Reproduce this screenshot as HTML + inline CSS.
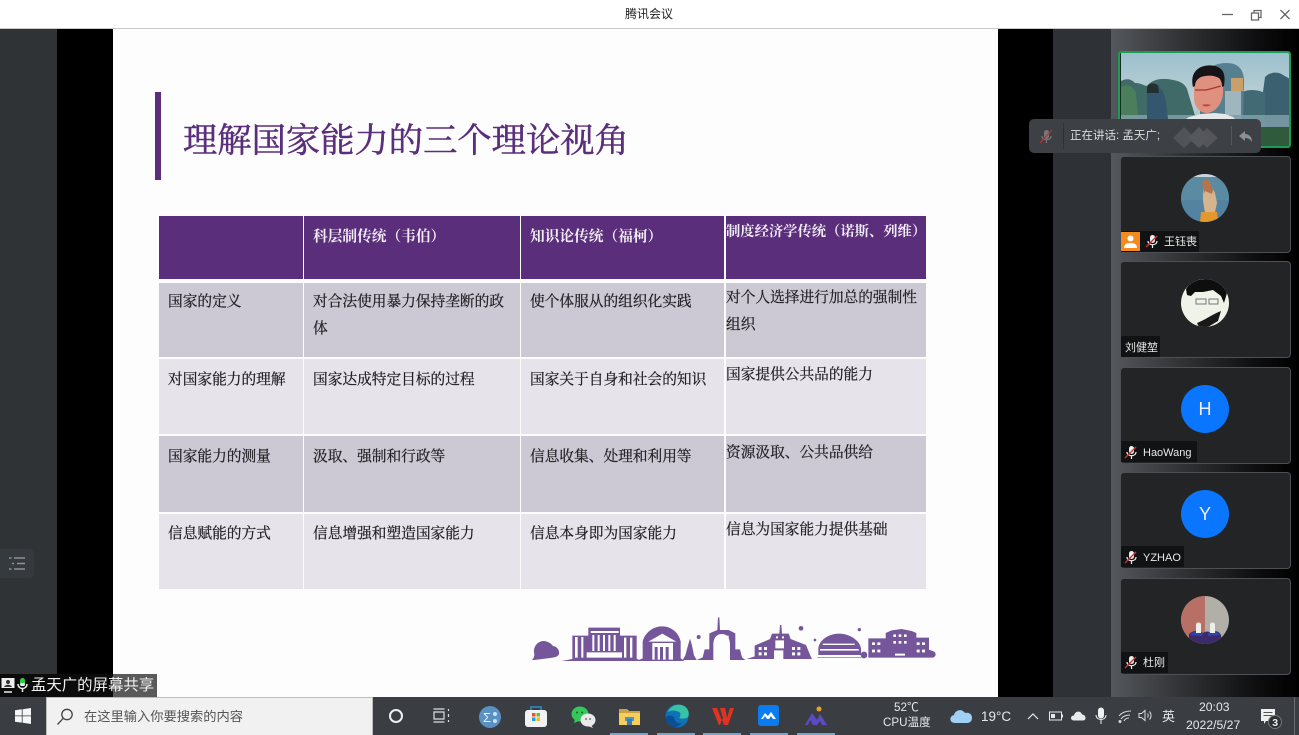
<!DOCTYPE html>
<html lang="zh"><head><meta charset="utf-8"><title>腾讯会议</title>
<style>
html,body{margin:0;padding:0;background:#000}
#p{position:relative;width:1299px;height:735px;overflow:hidden;background:#000;font-family:"Liberation Sans","Noto Sans CJK SC",sans-serif}
#p div,#p span.a,#p svg{position:absolute}
.t{white-space:nowrap;line-height:1}
.s{font-family:"Liberation Serif","Noto Serif CJK SC",serif;font-size:14.7px;color:#1f1f23;white-space:nowrap;line-height:1;-webkit-text-stroke:.25px #1f1f23}
.h{font-weight:700;color:#f1edf5;-webkit-text-stroke:0}
.card{left:1120px;width:171px;height:97px;background:#222426;border:1px solid #4d5054;border-radius:4px;box-sizing:border-box}
.av{left:1181px;width:48px;height:48px;border-radius:50%;overflow:hidden}
.lab{left:1121px;height:21px;background:#111213}
.n{color:#e8e8e8;font-size:11px;white-space:nowrap;line-height:1}
.c{background:#cdc9d4}.d{background:#e6e4ea}.pu{background:#5b2e7b}
.tb{color:#e6e8ea;white-space:nowrap;line-height:1}
</style></head><body><div id="p">
<!-- title bar -->
<div style="left:0;top:0;width:1299px;height:28px;background:#fff;border-bottom:1px solid #c9c9c9;box-sizing:content-box"></div>
<div class="t" style="left:625px;top:8px;font-size:12px;color:#222">腾讯会议</div>
<svg style="left:1220px;top:8px" width="72" height="13" viewBox="0 0 72 13" fill="none" stroke="#666" stroke-width="1.300"><path d="M2 6.500H13"/><path d="M31.500 5h7v7h-7zM34 5V2.500h7v7h-2.500"/><path d="M60.500 2l9 9M69.500 2l-9 9"/></svg>
<!-- backgrounds -->
<div style="left:0;top:29px;width:57px;height:668px;background:#2f3336"></div>
<div style="left:113px;top:29px;width:885px;height:668px;background:#fdfdfe"></div>
<div style="left:1053px;top:29px;width:58px;height:668px;background:#2e3236"></div>
<div style="left:1111px;top:29px;width:188px;height:668px;background:linear-gradient(90deg,#55585c 0,#333538 35%,#0c0c0d 80%,#000 100%)"></div>
<!-- list button -->
<div style="left:0;top:549px;width:34px;height:29px;background:#353a3e;border-radius:0 5px 5px 0"></div>
<svg style="left:9px;top:556px" width="17" height="15" viewBox="0 0 17 15" fill="none" stroke="#8f9194" stroke-width="1.600"><path d="M0 2h2.500M5 2h11M3 7.500h2M8 7.500h8M0 13h2.500M5 13h11"/></svg>
<!-- slide title -->
<div style="left:155px;top:92px;width:6px;height:88px;background:#5b2e7b"></div>
<div class="t" style="left:183px;top:124px;font-family:'Liberation Serif','Noto Serif CJK SC',serif;font-size:34.300px;color:#5b2e7b;-webkit-text-stroke:.5px #5b2e7b">理解国家能力的三个理论视角</div>
<!-- table -->
<div class="pu" style="left:159px;top:216px;width:144px;height:63px"></div>
<div class="pu" style="left:304px;top:216px;width:216px;height:63px"></div>
<div class="pu" style="left:521px;top:216px;width:203px;height:63px"></div>
<div class="pu" style="left:726px;top:216px;width:200px;height:63px"></div>

<div class="c" style="left:159px;top:283px;width:144px;height:74px"></div>
<div class="c" style="left:304px;top:283px;width:216px;height:74px"></div>
<div class="c" style="left:521px;top:283px;width:203px;height:74px"></div>
<div class="c" style="left:726px;top:283px;width:200px;height:74px"></div>

<div class="d" style="left:159px;top:359px;width:144px;height:75px"></div>
<div class="d" style="left:304px;top:359px;width:216px;height:75px"></div>
<div class="d" style="left:521px;top:359px;width:203px;height:75px"></div>
<div class="d" style="left:726px;top:359px;width:200px;height:75px"></div>

<div class="c" style="left:159px;top:436px;width:144px;height:76px"></div>
<div class="c" style="left:304px;top:436px;width:216px;height:76px"></div>
<div class="c" style="left:521px;top:436px;width:203px;height:76px"></div>
<div class="c" style="left:726px;top:436px;width:200px;height:76px"></div>

<div class="d" style="left:159px;top:514px;width:144px;height:75px"></div>
<div class="d" style="left:304px;top:514px;width:216px;height:75px"></div>
<div class="d" style="left:521px;top:514px;width:203px;height:75px"></div>
<div class="d" style="left:726px;top:514px;width:200px;height:75px"></div>

<div class="s h" style="left:313px;top:230px">科层制传统（韦伯）</div>
<div class="s h" style="left:530px;top:230px">知识论传统（福柯）</div>
<div class="s h" style="left:726px;top:225px;font-size:14.300px">制度经济学传统（诺斯、列维）</div>

<div class="s" style="left:168px;top:295px">国家的定义</div>
<div class="s" style="left:313px;top:295px">对合法使用暴力保持垄断的政</div>
<div class="s" style="left:313px;top:322px">体</div>
<div class="s" style="left:530px;top:295px">使个体服从的组织化实践</div>
<div class="s" style="left:726px;top:291px">对个人选择进行加总的强制性</div>
<div class="s" style="left:726px;top:318px">组织</div>

<div class="s" style="left:168px;top:373px">对国家能力的理解</div>
<div class="s" style="left:313px;top:373px">国家达成特定目标的过程</div>
<div class="s" style="left:530px;top:373px">国家关于自身和社会的知识</div>
<div class="s" style="left:726px;top:368px">国家提供公共品的能力</div>

<div class="s" style="left:168px;top:450px">国家能力的测量</div>
<div class="s" style="left:313px;top:450px">汲取、强制和行政等</div>
<div class="s" style="left:530px;top:450px">信息收集、处理和利用等</div>
<div class="s" style="left:726px;top:446px">资源汲取、公共品供给</div>

<div class="s" style="left:168px;top:527px">信息赋能的方式</div>
<div class="s" style="left:313px;top:527px">信息增强和塑造国家能力</div>
<div class="s" style="left:530px;top:527px">信息本身即为国家能力</div>
<div class="s" style="left:726px;top:523px">信息为国家能力提供基础</div>

<!-- skyline -->
<svg style="left:520px;top:605px" width="430" height="70" viewBox="0 0 1290 210" fill="#76569a">
<path d="M35 165c6-4 8-10 8-18-4-14 2-32 20-38 16-4 30 6 36 14 14 2 20 14 18 24-4 10-14 10-26 12-20 2-40 6-56 6z"/>
<path d="M125 168l32-6V92h48V68h95v24h50v70l20 6z"/>
<g fill="#fff"><path d="M165 96h8v62h-8zM184 96h6v62h-6zM212 78h84v6h-84zM217 90h6v48h-6zM233 90h6v48h-6zM249 90h6v48h-6zM265 90h6v48h-6zM281 90h6v48h-6zM200 142h106v16H200zM312 98h7v60h-7zM330 98h7v60h-7z"/></g>
<path d="M350 168l18-8v-50c6-26 30-46 58-46s50 18 56 46v50l12 8z"/>
<path d="M385 110l42-24 42 24zM397 114h62v50h-62z" fill="#fff"/><path d="M404 126h9v38h-9zM420 126h9v38h-9zM437 126h9v38h-9z"/>
<path d="M488 165l8-14 8-30 6-20 6 20 6 30 8 14z"/>
<path d="M530 165l18-8 6-24h14V85l24-10 2-38h4l2 38 26 0 20 10v48h14l6 24 10 8h-46v-46c0-18-8-32-24-32-18 0-26 14-26 32v46z"/>
<path d="M592 92h34v12h-34z" fill="#fff"/>
<circle cx="536" cy="96" r="6"/>
<path d="M680 162l24-8v-32l46-20 6-16h22l2-26h4l2 26h20l6 16 46 18 14 34 4 8H790v-26h-28v26z"/>
<g fill="#fff"><path d="M716 126h9v9h-9zM732 126h9v9h-9zM716 142h9v9h-9zM732 142h9v9h-9zM816 126h9v9h-9zM832 126h9v9h-9zM816 142h9v9h-9zM832 142h9v9h-9zM766 106h26v24h-26zM768 94h6v6h-6zM786 94h6v6h-6z"/></g>
<circle cx="843" cy="70" r="7"/>
<path d="M895 130c2-24 30-44 62-44s62 20 66 44v20H895z"/>
<path d="M908 116h96v4h-96zM900 132h116v5H900zM894 152h130v4H894z" fill="#fff"/>
<path d="M892 156h132v3H892z" opacity=".6"/>
<circle cx="1018" cy="74" r="5"/><circle cx="885" cy="105" r="4"/>
<circle cx="1032" cy="150" r="10"/>
<path d="M1045 158V100h52V84l18-8 30-4 30 6 14 6v14h38v36l16 6-2 18z"/>
<g fill="#fff"><path d="M1056 112h9v8h-9zM1072 112h9v8h-9zM1056 134h9v8h-9zM1072 134h9v8h-9zM1120 88h8v8h-8zM1136 88h8v8h-8zM1152 88h8v8h-8zM1120 108h8v8h-8zM1136 108h8v8h-8zM1152 108h8v8h-8zM1190 112h9v8h-9zM1206 112h9v8h-9zM1190 134h9v8h-9zM1206 134h9v8h-9zM1125 146h30v6h-30z"/></g>
<circle cx="1238" cy="148" r="9"/>
</svg>

<!-- screen share label -->
<div style="left:0;top:674px;width:113px;height:23px;background:#0b0b0b"></div>
<div style="left:113px;top:674px;width:44px;height:23px;background:#5a5a5a"></div>
<svg style="left:1px;top:677px" width="29" height="17" viewBox="0 0 29 17"><path d="M0.500 1h13v10H0.500z" fill="#eee"/><path d="M3 15h8" stroke="#eee" stroke-width="1.500"/><circle cx="7" cy="5" r="2" fill="#333"/><path d="M3 10c1-3 7-3 8 0z" fill="#333"/><rect x="19" y="1" width="5" height="8" rx="2.500" fill="#2ecc40"/><rect x="19" y="6" width="5" height="3" rx="1.500" fill="#eee"/><path d="M17 7c0 6 9 6 9 0M21.500 12v3" stroke="#eee" stroke-width="1.500" fill="none"/></svg>
<div class="t" style="left:31px;top:678px;font-size:15.400px;color:#f0f0f0">孟天广的屏幕共享</div>

<!-- right cards -->
<div style="left:1118px;top:51px;width:173px;height:97px;box-sizing:border-box;border:2px solid #1d9a56;border-radius:3px;overflow:hidden;background:#1a2a24">
  <svg style="left:1px;top:0" width="169" height="94" viewBox="0 0 169 94">
    <defs><linearGradient id="sky" x1="0" y1="0" x2="0" y2="1"><stop offset="0" stop-color="#9cc0ce"/><stop offset=".5" stop-color="#bcd0d4"/><stop offset="1" stop-color="#a0b8bc"/></linearGradient></defs>
    <rect width="169" height="94" fill="url(#sky)"/>
    <path d="M0 28c6-3 10-2 14 2 5 0 8 2 12 3 4-6 14-9 26-6 7 1 12 4 14 9l12 40H0z" fill="#3f6a68"/>
    <path d="M0 34c6-4 12-1 15 6l3 34H0z" fill="#4b7f5c"/>
    <path d="M144 24c6-6 14-5 18-2l7 4v50h-32z" fill="#3b6070"/>
    <path d="M120 40c6-4 16-4 24 0v36h-24z" fill="#416a74"/>
    <path d="M79 34c1-14 11-24 26-24s17 9 18 16l-1 50H79z" fill="#56808f"/>
    <path d="M110 25h12v13h-12z" fill="#c9a06a"/>
    <path d="M104 38h16v36h-16z" fill="#9fb6bf"/>
    <rect y="62" width="169" height="14" fill="#7f9fa8" opacity=".85"/>
    <rect y="74" width="169" height="20" fill="#2f5a3c"/>
    <path d="M26 66V38c1-8 11-9 13-3 4 4 5 8 6 14l2 17z" fill="#34566e"/>
    <path d="M26 34c1-4 9-5 11-1l1 7H26z" fill="#24302f"/>
    <path d="M62 68l6-4 12-3 14-1 10 1 8 3 4 4z" fill="#e4e8ea"/>
    <path d="M73 26c3-6 9-8 15-8 7 0 12 3 14 9l0 14c-1 9-6 17-15 19-8 0-13-5-14-14z" fill="#e0907e"/>
    <path d="M72 34c-2-9 0-16 8-20 7-3 17-2 21 3 3 4 3 10 2 16l-2 1c0-4-1-7-3-9-5-3-12-3-18-1-4 2-6 5-6 9z" fill="#171417"/>
    <path d="M74 37h11l4-1 11-3" stroke="#a33" stroke-width="1.200" fill="none"/>
    <path d="M81 52c2-1 6-1 9 0-3 2-7 2-9 0z" fill="#b84a48"/>
  </svg>
</div>
<div class="card" style="top:156px"></div>
<div class="card" style="top:261px"></div>
<div class="card" style="top:367px"></div>
<div class="card" style="top:472px"></div>
<div class="card" style="top:578px"></div>

<!-- speaking tooltip -->
<div style="left:1029px;top:119px;width:232px;height:34px;background:#3d4045;border-radius:5px"></div>
<div style="left:1063px;top:123px;width:1px;height:26px;background:#2d3034"></div>
<div style="left:1231px;top:126px;width:1px;height:19px;background:#55585c"></div>
<svg style="left:1039px;top:129px" width="14" height="15" viewBox="0 0 14 15"><rect x="5" y="1" width="5" height="9" rx="2.500" fill="#777"/><path d="M3 7c0 5 9 5 9 0M7.500 11v3" stroke="#777" fill="none" stroke-width="1.200"/><path d="M1 14L13 1" stroke="#b33" stroke-width="1.200"/></svg>
<div class="t" style="left:1070px;top:131px;font-size:11.500px;color:#dcdcdc">正在讲话: 孟天广;</div>
<svg style="left:1172px;top:123px" width="48" height="26" viewBox="0 0 48 26" fill="#55585c"><path d="M1 15L12 4l11 11-11 10z" opacity=".8"/><path d="M16 15L27 4l11 11-11 10z"/><path d="M25 15L35 5l11 10-11 10z" opacity=".9"/></svg>
<svg style="left:1238px;top:130px" width="15" height="14" viewBox="0 0 15 14"><path d="M7 1L1 6l6 5V8c3 0 5 1 7 4 0-5-3-8-7-8z" fill="#8d8f92"/></svg>

<!-- avatars -->
<div class="av" style="top:174px;background:#5b8aa3">
 <svg style="left:0;top:0" width="48" height="48" viewBox="0 0 48 48"><rect width="48" height="3" fill="#c9d6dc"/><rect y="26" width="48" height="22" fill="#5383a0"/><path d="M22 12l8 0 4 7 2 10-2 9-10 1-2-12z" fill="#d6b48e"/><path d="M21 8c2-3 6-3 8 0l3 8-1 4-7-3-1 3z" fill="#b5734e"/><path d="M20 38h16l1 10H19z" fill="#e3982d"/></svg>
</div>
<div class="av" style="top:279px;background:#f0f3e8">
 <svg style="left:0;top:0" width="48" height="48" viewBox="0 0 48 48"><path d="M5 10C10 2 18 0 26 0c10 0 17 5 20 14l-3 10-3-7-8-6-10 2-8 0-4 4-4-1z" fill="#0e0e0e"/><path d="M15 20h10v5H15zM28 20h9v5h-9z" stroke="#777" fill="none"/><path d="M16 44c8-3 14-8 24-12l-3 10-10 6-9 0z" fill="#191919"/></svg>
</div>
<div class="av" style="top:385px;background:#0a75ff"><div class="t" style="left:0;width:48px;top:15px;text-align:center;font-size:18px;color:#eef">H</div></div>
<div class="av" style="top:490px;background:#0a75ff"><div class="t" style="left:0;width:48px;top:15px;text-align:center;font-size:18px;color:#eef">Y</div></div>
<div class="av" style="top:596px;background:#b2aea8">
 <svg style="left:0;top:0" width="48" height="48" viewBox="0 0 48 48"><rect width="24" height="48" fill="#b86f66"/><path d="M8 38c4-4 11-4 14-1 3-2 5-2 8 0 4-3 8-2 10 2l1 9H8z" fill="#3c2a6a"/><path d="M9 39c3-4 9-5 13-2l-1 3zM27 37c4-3 9-2 12 2l-12 1z" fill="#2f45a8"/><path d="M15 28c1-2 4-2 5 0l0 9h-5zM29 28c1-2 4-2 5 0v9h-5z" fill="#f0eeea"/></svg>
</div>

<!-- labels -->
<div class="lab" style="left:1121px;top:231px;width:78px"></div>
<div style="left:1121px;top:232px;width:19px;height:19px;background:#f58a1f"></div>
<svg style="left:1123px;top:234px" width="15" height="15" viewBox="0 0 15 15" fill="#fff"><circle cx="7.500" cy="4.500" r="3"/><path d="M1 14c0-4 3-5 6.500-5s6.500 1 6.500 5z"/></svg>
<div class="n" style="left:1164px;top:237px">王钰喪</div>
<div class="lab" style="left:1121px;top:336px;width:39px"></div>
<div class="n" style="left:1125px;top:343px">刘健堃</div>
<div class="lab" style="left:1121px;top:441px;width:76px"></div>
<div class="n" style="left:1143px;top:448px">HaoWang</div>
<div class="lab" style="left:1121px;top:546px;width:63px"></div>
<div class="n" style="left:1143px;top:553px">YZHAO</div>
<div class="lab" style="left:1121px;top:652px;width:47px"></div>
<div class="n" style="left:1143px;top:658px">杜刚</div>
<svg style="left:1145px;top:234px" width="14" height="15" viewBox="0 0 14 15"><rect x="5" y="1" width="5" height="8" rx="2.500" fill="#eee"/><path d="M3 7c0 5 9 5 9 0M7.500 11v3" stroke="#eee" fill="none" stroke-width="1.200"/><path d="M1 13L12 2" stroke="#c33" stroke-width="1.300"/></svg>
<svg style="left:1124px;top:445px" width="14" height="15" viewBox="0 0 14 15"><rect x="5" y="1" width="5" height="8" rx="2.500" fill="#eee"/><path d="M3 7c0 5 9 5 9 0M7.500 11v3" stroke="#eee" fill="none" stroke-width="1.200"/><path d="M1 13L12 2" stroke="#c33" stroke-width="1.300"/></svg>
<svg style="left:1124px;top:550px" width="14" height="15" viewBox="0 0 14 15"><rect x="5" y="1" width="5" height="8" rx="2.500" fill="#eee"/><path d="M3 7c0 5 9 5 9 0M7.500 11v3" stroke="#eee" fill="none" stroke-width="1.200"/><path d="M1 13L12 2" stroke="#c33" stroke-width="1.300"/></svg>
<svg style="left:1124px;top:655px" width="14" height="15" viewBox="0 0 14 15"><rect x="5" y="1" width="5" height="8" rx="2.500" fill="#eee"/><path d="M3 7c0 5 9 5 9 0M7.500 11v3" stroke="#eee" fill="none" stroke-width="1.200"/><path d="M1 13L12 2" stroke="#c33" stroke-width="1.300"/></svg>

<!-- taskbar -->
<div style="left:0;top:697px;width:1299px;height:38px;background:#3a3e42"></div>
<svg style="left:15px;top:708px" width="16" height="16" viewBox="0 0 16 16" fill="#f4f6f8"><path d="M0 2.300l6.800-1v6.200H0zM7.600 1.200L16 0v7.500H7.600zM0 8.300h6.800v6.300L0 13.700zM7.600 8.300H16V16l-8.400-1.200z"/></svg>
<div style="left:46px;top:697px;width:327px;height:38px;background:#f1f1f1;border:1px solid #bcbcbc;border-bottom:0;box-sizing:border-box"></div>
<svg style="left:56px;top:708px" width="18" height="18" viewBox="0 0 18 18" fill="none" stroke="#444" stroke-width="1.300"><circle cx="11" cy="6.500" r="5.200"/><path d="M7.200 10.300L1.500 16.500"/></svg>
<div class="t" style="left:84px;top:710px;font-size:13.250px;color:#555">在这里输入你要搜索的内容</div>
<svg style="left:387px;top:707px" width="18" height="18" viewBox="0 0 18 18" fill="none" stroke="#eef0f2" stroke-width="2"><circle cx="9" cy="9" r="6"/></svg>
<svg style="left:433px;top:708px" width="17" height="15" viewBox="0 0 17 15" fill="none" stroke="#ddd" stroke-width="1.200"><path d="M0.500 1h11M0.500 14h11M1 4h10v7H1zM15.500 1v2M15.500 6v3M15.500 12v2"/></svg>
<svg style="left:478px;top:705px" width="24" height="24" viewBox="0 0 24 24"><circle cx="12" cy="12" r="11" fill="#5a91c4"/><text x="5" y="17" font-size="13" fill="#e6f0fa" font-family="Liberation Sans">Σ</text><circle cx="17" cy="9" r="2" fill="#cfe0ef"/><circle cx="17" cy="16" r="2" fill="#cfe0ef"/></svg>
<svg style="left:524px;top:704px" width="24" height="24" viewBox="0 0 24 24"><path d="M7 7V3h10v4" fill="none" stroke="#2a8ccf" stroke-width="1.600"/><rect x="1" y="6" width="22" height="17" rx="3" fill="#f2f2f2"/><rect x="8" y="9" width="3.500" height="3.500" fill="#e8552a"/><rect x="12.500" y="9" width="3.500" height="3.500" fill="#6fb92c"/><rect x="8" y="13.500" width="3.500" height="3.500" fill="#1f9ee0"/><rect x="12.500" y="13.500" width="3.500" height="3.500" fill="#f8b916"/></svg>
<svg style="left:571px;top:706px" width="25" height="22" viewBox="0 0 25 22"><ellipse cx="9" cy="8" rx="8.500" ry="7.500" fill="#35c75a"/><path d="M4 13l-1 4 5-2z" fill="#35c75a"/><ellipse cx="17" cy="14" rx="7.500" ry="6.500" fill="#e9e9e9"/><path d="M20 19l2 3-5-2z" fill="#e9e9e9"/><circle cx="6" cy="6.500" r="1" fill="#14632b"/><circle cx="11" cy="6.500" r="1" fill="#14632b"/><circle cx="15" cy="13" r="1" fill="#777"/><circle cx="19" cy="13" r="1" fill="#777"/></svg>
<svg style="left:619px;top:707px" width="21" height="18" viewBox="0 0 21 18"><path d="M0 2h8l2 2h11v14H0z" fill="#f6cf5b"/><path d="M0 2h8l2 2h11v2H0z" fill="#c9a046"/><path d="M6 10h9v4H6z" fill="#4b94c9"/><path d="M8 12h5v6H8z" fill="#3a7cb0"/></svg>
<svg style="left:665px;top:704px" width="24" height="24" viewBox="0 0 24 24"><circle cx="12" cy="12" r="11.500" fill="#0f72b6"/><path d="M3 8C6 1 14-1 19 2c4 2 6 7 4 11-2 2-6 2-9 1 2-2 2-5 0-6-4-2-8-2-11 0z" fill="#37c2a8"/><path d="M9 13c0 4 4 7 8 6-2 2-4 4-7 4-6 0-10-5-9-10 2-2 5-2 8 0z" fill="#0a4f96"/></svg>
<svg style="left:711px;top:705px" width="24" height="22" viewBox="0 0 24 22"><path d="M1 3h5l5 13 1-3-3-10h5l2 10 3-10h4l-6 17h-4l-2-6-2 6H8z" fill="#e33222"/></svg>
<svg style="left:758px;top:705px" width="21" height="21" viewBox="0 0 21 21"><rect width="21" height="21" rx="3" fill="#0b7bf2"/><path d="M3 14l4-6 3 3 3-4 5 7-3 0-2-3-2 3-2 0-2-3-2 3z" fill="#fff"/></svg>
<svg style="left:804px;top:705px" width="24" height="21" viewBox="0 0 24 21"><circle cx="15" cy="4" r="2.500" fill="#e9a032"/><path d="M1 20L8 8l5 7 3-6 7 11h-5l-2-4-3 4H9l-3-5-2 5z" fill="#5b4bc4"/></svg>
<!-- running indicators -->
<div style="left:610px;top:733px;width:38px;height:2px;background:#6fa6d2"></div>
<div style="left:657px;top:733px;width:38px;height:2px;background:#6fa6d2"></div>
<div style="left:703px;top:733px;width:38px;height:2px;background:#6fa6d2"></div>
<div style="left:750px;top:733px;width:38px;height:2px;background:#6fa6d2"></div>
<div style="left:797px;top:733px;width:38px;height:2px;background:#6fa6d2"></div>
<!-- tray -->
<div class="tb" style="left:894px;top:702px;font-size:11.700px">52℃</div>
<div class="tb" style="left:883px;top:717px;font-size:11.600px">CPU温度</div>
<svg style="left:950px;top:707px" width="22" height="17" viewBox="0 0 22 17"><path d="M5 16c-6 0-6-7-1-8 1-5 8-7 11-2 5-1 7 2 7 5 0 3-2 5-5 5z" fill="#9fd0f5"/></svg>
<div class="tb" style="left:981px;top:710px;font-size:13.500px">19°C</div>
<svg style="left:1027px;top:712px" width="12" height="8" viewBox="0 0 12 8" fill="none" stroke="#e6e8ea" stroke-width="1.200"><path d="M1 7l5-5 5 5"/></svg>
<svg style="left:1049px;top:711px" width="14" height="10" viewBox="0 0 14 10"><rect x="0.500" y="1" width="12" height="8" fill="none" stroke="#e6e8ea"/><rect x="2" y="3" width="4" height="4" fill="#e6e8ea"/><rect x="13" y="3.500" width="1" height="3" fill="#e6e8ea"/></svg>
<svg style="left:1071px;top:710px" width="16" height="11" viewBox="0 0 16 11"><path d="M3 10.500c-4 0-4-5 0-5 1-5 7-5 8-1 4 0 5 6 1 6z" fill="#e8eaec"/></svg>
<svg style="left:1095px;top:707px" width="12" height="18" viewBox="0 0 12 18"><rect x="3" y="0.500" width="6" height="11" rx="3" fill="#eef0f2"/><path d="M1 8c0 6 10 6 10 0M6 13v4" stroke="#eef0f2" fill="none"/></svg>
<svg style="left:1118px;top:710px" width="14" height="13" viewBox="0 0 14 13" fill="none" stroke="#d8dadc" stroke-width="1"><path d="M1 6c3-4 8-5 12-5M3 9c2-3 5-4 9-4M6 11c1-2 3-3 5-3"/><circle cx="2" cy="11.500" r="1" fill="#d8dadc"/></svg>
<svg style="left:1138px;top:709px" width="15" height="13" viewBox="0 0 15 13" fill="none" stroke="#d8dadc" stroke-width="1"><path d="M1 4.500h2.500L7 1.500v10l-3.500-3H1zM9.500 4.500c1 1 1 3 0 4M11.500 2.500c2 2 2 6 0 8"/></svg>
<div class="tb" style="left:1162px;top:710px;font-size:13px">英</div>
<div class="tb" style="left:1199px;top:701px;font-size:12.200px">20:03</div>
<div class="tb" style="left:1186px;top:719px;font-size:12.200px">2022/5/27</div>
<svg style="left:1260px;top:708px" width="24" height="22" viewBox="0 0 24 22"><path d="M1 1h14v12H6l-2 3v-3H1z" fill="#eef0f2"/><path d="M3.500 4.500h9M3.500 7.500h9" stroke="#555"/><circle cx="15" cy="14" r="6.500" fill="#2c2f33" stroke="#777"/><text x="12.300" y="17.800" font-size="10.500" font-weight="700" fill="#eee" font-family="Liberation Sans">3</text></svg>
<div style="left:1294px;top:697px;width:1px;height:38px;background:#6a6d70"></div>
</div></body></html>
